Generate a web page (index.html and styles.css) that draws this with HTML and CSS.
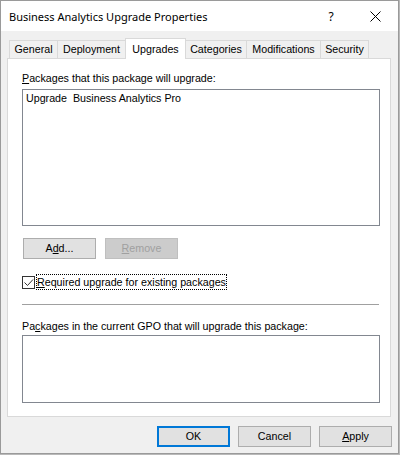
FILE: index.html
```html
<!DOCTYPE html>
<html>
<head>
<meta charset="utf-8">
<title>Business Analytics Upgrade Properties</title>
<link rel="stylesheet" href="styles.css">
</head>
<body>
<div class="window">
  <div class="titlebar">
    <span class="title">Business Analytics Upgrade Properties</span>
    <span class="help">?</span>
    <span class="close"><svg width="11" height="11" viewBox="0 0 11 11"><path d="M0.5 0.5 L10.5 10.5 M10.5 0.5 L0.5 10.5" stroke="#000" stroke-width="1" fill="none"/></svg></span>
  </div>
  <div class="body">
    <div class="tabs">
      <div class="tab t-general">General</div>
      <div class="tab t-deploy">Deployment</div>
      <div class="tab selected t-upgrades">Upgrades</div>
      <div class="tab t-categories">Categories</div>
      <div class="tab t-mods">Modifications</div>
      <div class="tab last t-security">Security</div>
    </div>
    <div class="panel">
      <div class="label first"><u>P</u>ackages that this package will upgrade:</div>
      <div class="listbox lb1"><div class="item">Upgrade  Business Analytics Pro</div></div>
      <div class="btnrow">
        <button class="btn">A<u>d</u>d...</button>
        <button class="btn disabled"><u>R</u>emove</button>
      </div>
      <div class="checkrow">
        <span class="checkbox"><svg width="11" height="11" viewBox="0 0 11 11"><path d="M1.5 5.5 L4.5 8.5 L10 2.5" stroke="#333" stroke-width="1" fill="none"/></svg></span>
        <span class="checklabel"><u>R</u>equired upgrade for existing packages</span>
      </div>
      <div class="sep"></div>
      <div class="label second">Pa<u>c</u>kages in the current GPO that will upgrade this package:</div>
      <div class="listbox lb2"></div>
    </div>
    <div class="footer">
      <button class="btn default">OK</button>
      <button class="btn">Cancel</button>
      <button class="btn"><u>A</u>pply</button>
    </div>
  </div>
</div>
</body>
</html>
```

FILE: styles.css
```css
html, body {
  margin: 0;
  padding: 0;
  width: 400px;
  height: 455px;
  overflow: hidden;
  background: #b9b9b9;
}

.window {
  width: 397px;
  height: 452px;
  border: 1px solid #9a9a9a;
  background: #f0f0f0;
  font-family: "Liberation Sans", Arial, sans-serif;
  font-size: 10.7px;
  color: #000;
}

u {
  text-decoration: underline;
  text-underline-offset: 1px;
}

.titlebar {
  height: 30px;
  background: #fff;
  display: flex;
  align-items: center;
  padding-left: 8px;
}

.title {
  font-family: "Noto Sans", "Open Sans", sans-serif;
  font-size: 11px;
  flex: 1;
}

.help {
  font-family: "Noto Sans", sans-serif;
  font-size: 12px;
  width: 12px;
  text-align: center;
  margin-right: 33px;
}

.close {
  width: 11px;
  height: 11px;
  margin-right: 17px;
  display: flex;
}

.body {
  padding: 7px 6px 0 6px;
}

.tabs {
  display: flex;
  align-items: flex-end;
  height: 21px;
  margin-left: 2px;
  margin-bottom: -1px;
  position: relative;
  z-index: 1;
}

.tab {
  box-sizing: border-box;
  height: 18px;
  margin-bottom: 1px;
  border-top: 1px solid #d9d9d9;
  border-left: 1px solid #d9d9d9;
  background: #f0f0f0;
  text-align: center;
  line-height: 17px;
  white-space: nowrap;
}

.tab.last {
  border-right: 1px solid #d9d9d9;
}

.tab.selected {
  height: 21px;
  margin-bottom: 0;
  background: #fff;
  border-right: 1px solid #d9d9d9;
  line-height: 20px;
  position: relative;
  z-index: 2;
}

.t-general { width: 48px; }
.t-deploy { width: 68px; }
.t-upgrades { width: 61px; }
.t-categories { width: 61px; margin-left: -1px; }
.t-mods { width: 74px; }
.t-security { width: 49px; }

.panel {
  box-sizing: border-box;
  width: 384px;
  height: 359px;
  border: 1px solid #d9d9d9;
  background: #fff;
  padding-left: 14px;
}

.label {
  line-height: 14px;
  white-space: nowrap;
}

.label.first {
  margin-top: 12px;
}

.listbox {
  box-sizing: border-box;
  width: 358px;
  border: 1px solid #828790;
  background: #fff;
}

.lb1 {
  height: 137px;
  margin-top: 4px;
}

.item {
  padding: 2px 0 0 3px;
  line-height: 13px;
  white-space: pre;
}

.btnrow {
  display: flex;
  gap: 9px;
  margin-top: 12px;
  margin-left: 1px;
}

.btn {
  box-sizing: border-box;
  width: 73px;
  height: 21px;
  padding: 0;
  margin: 0;
  border: 1px solid #adadad;
  background: #e1e1e1;
  font-family: "Liberation Sans", Arial, sans-serif;
  font-size: 10.7px;
  color: #000;
  line-height: 19px;
  text-align: center;
}

.btn.disabled {
  background: #cccccc;
  border-color: #bfbfbf;
  color: #a0a0a0;
}

.btn.default {
  border: 2px solid #0078d7;
  line-height: 17px;
}

.checkrow {
  display: flex;
  align-items: flex-start;
  height: 16px;
  margin-top: 15px;
}

.checkbox {
  box-sizing: border-box;
  width: 13px;
  height: 13px;
  margin-top: 2px;
  border: 1px solid #333;
  background: #fff;
  display: flex;
}

.checklabel {
  margin-left: 1px;
  border: 1px dotted #000;
  line-height: 14px;
  white-space: nowrap;
}

.sep {
  width: 357px;
  height: 1px;
  background: #a0a0a0;
  margin-top: 14px;
}

.label.second {
  margin-top: 14px;
}

.lb2 {
  height: 68px;
  margin-top: 2px;
}

.footer {
  display: flex;
  justify-content: flex-end;
  gap: 8px;
  margin-top: 9px;
}
```
